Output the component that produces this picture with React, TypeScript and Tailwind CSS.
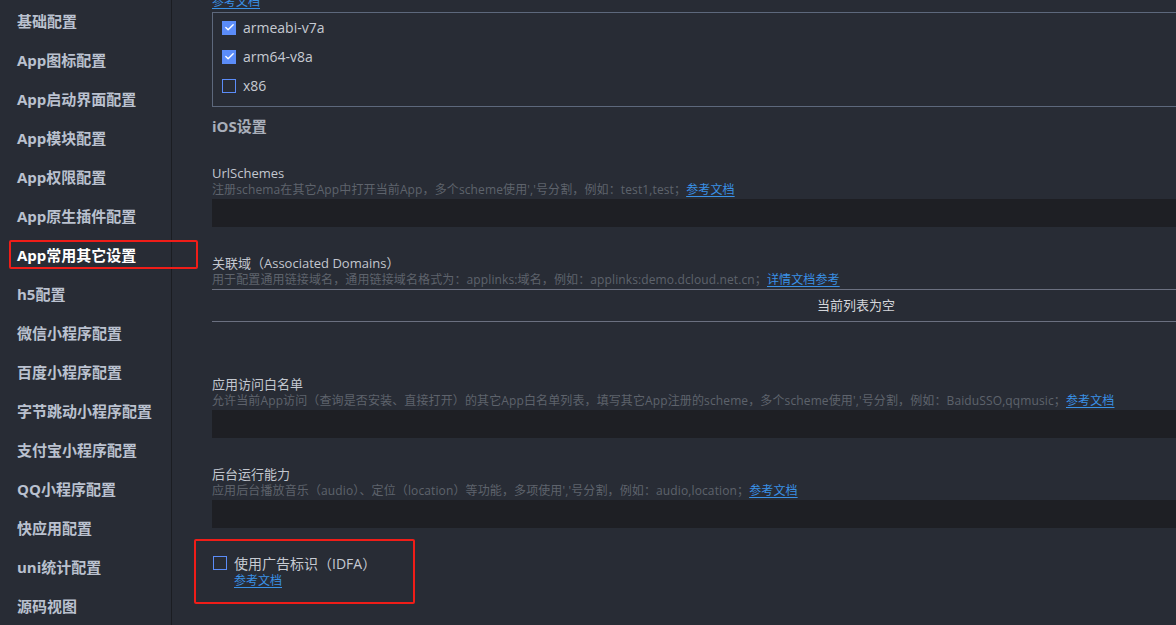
import { Check } from "lucide-react";

const navItems = [
  "基础配置",
  "App图标配置",
  "App启动界面配置",
  "App模块配置",
  "App权限配置",
  "App原生插件配置",
  "App常用其它设置",
  "h5配置",
  "微信小程序配置",
  "百度小程序配置",
  "字节跳动小程序配置",
  "支付宝小程序配置",
  "QQ小程序配置",
  "快应用配置",
  "uni统计配置",
  "源码视图",
];

const font = "font-['Open_Sans','Noto_Sans_CJK_SC',sans-serif]";

function Box({ checked }: { checked: boolean }) {
  return checked ? (
    <span className="w-[14px] h-[14px] bg-[#5b8cf8] flex items-center justify-center shrink-0">
      <Check size={11} strokeWidth={3} className="text-white" />
    </span>
  ) : (
    <span className="block w-[14px] h-[14px] border border-[#5b8cf8] shrink-0" />
  );
}

function DocLink({ text = "参考文档" }: { text?: string }) {
  return <a className="text-[#3a91e6] underline underline-offset-2">{text}</a>;
}

function Field({ title, desc, link }: { title: string; desc: string; link?: string }) {
  return (
    <div>
      <p className="text-[13px] leading-[18px] text-[#c3c7cf]">{title}</p>
      <p className="text-[12px] leading-[16px] tracking-[0.12px] text-[#5e636c] whitespace-nowrap">
        {desc}
        <DocLink text={link} />
      </p>
      <div className="mt-[1px] h-[28px] bg-[#1e1f24]" />
    </div>
  );
}

export default function App() {
  return (
    <div className={`flex h-[625px] w-[1176px] overflow-hidden bg-[#282c35] ${font}`}>
      {/* Sidebar */}
      <aside className="w-[172px] shrink-0 border-r border-[#1b1d22] pt-[2px]">
        {navItems.map((name) => {
          const active = name === "App常用其它设置";
          return (
            <div key={name} className="relative h-[39px] flex items-center pl-[17px]">
              <span
                className={`text-[15px] font-bold ${active ? "text-white" : "text-[#bac1cf]"}`}
              >
                {name}
              </span>
              {active && (
                <div className="absolute left-[9px] top-[4px] w-[189px] h-[29px] border-2 border-[#f01d18] rounded-[2px] z-10" />
              )}
            </div>
          );
        })}
      </aside>

      {/* Main */}
      <main className="flex-1 overflow-hidden pl-[40px]">
        <div className="w-[1288px]">
          <p className="-mt-[6px] text-[12px] leading-[16px]">
            <DocLink />
          </p>
          <div className="mt-[2px] border border-[#5d687c] pl-[9px] pb-[6px]">
            {[
              ["armeabi-v7a", true],
              ["arm64-v8a", true],
              ["x86", false],
            ].map(([label, on]) => (
              <div key={label as string} className="h-[29px] flex items-center gap-[7px]">
                <Box checked={on as boolean} />
                <span className="text-[14px] text-[#c6cad2]">{label}</span>
              </div>
            ))}
          </div>

          <p className="mt-[9px] text-[15px] leading-[20px] font-bold text-[#a9afba]">iOS设置</p>

          <div className="mt-[28px]">
            <Field
              title="UrlSchemes"
              desc="注册schema在其它App中打开当前App，多个scheme使用','号分割，例如：test1,test；"
              link="参考文档"
            />
          </div>

          <div className="mt-[27px]">
            <p className="text-[13px] leading-[18px] text-[#c3c7cf]">关联域（Associated Domains）</p>
            <p className="text-[12px] leading-[16px] tracking-[0.12px] text-[#5e636c] whitespace-nowrap">
              用于配置通用链接域名，通用链接域名格式为：applinks:域名，例如：applinks:demo.dcloud.net.cn；
              <DocLink text="详情文档参考" />
            </p>
            <div className="mt-[1px] h-[33px] border-y border-[#6b7080] flex items-center justify-center text-[13px] text-[#d4d6da]">
              当前列表为空
            </div>
          </div>

          <div className="mt-[53px]">
            <Field
              title="应用访问白名单"
              desc="允许当前App访问（查询是否安装、直接打开）的其它App白名单列表，填写其它App注册的scheme，多个scheme使用','号分割，例如：BaiduSSO,qqmusic；"
              link="参考文档"
            />
          </div>

          <div className="mt-[27px]">
            <Field
              title="后台运行能力"
              desc="应用后台播放音乐（audio）、定位（location）等功能，多项使用','号分割，例如：audio,location；"
              link="参考文档"
            />
          </div>

          <div className="relative mt-[11px] pt-[14px]">
            <div className="absolute -left-[18px] top-0 w-[221px] h-[65px] border-2 border-[#f01d18] rounded-[2px]" />
            <div className="h-[20px] flex items-center gap-[7px] pl-[1px]">
              <Box checked={false} />
              <span className="text-[14px] text-[#c6cad2]">使用广告标识（IDFA）</span>
            </div>
            <p className="pl-[22px] text-[12px] leading-[16px]">
              <DocLink />
            </p>
          </div>
        </div>
      </main>
    </div>
  );
}
